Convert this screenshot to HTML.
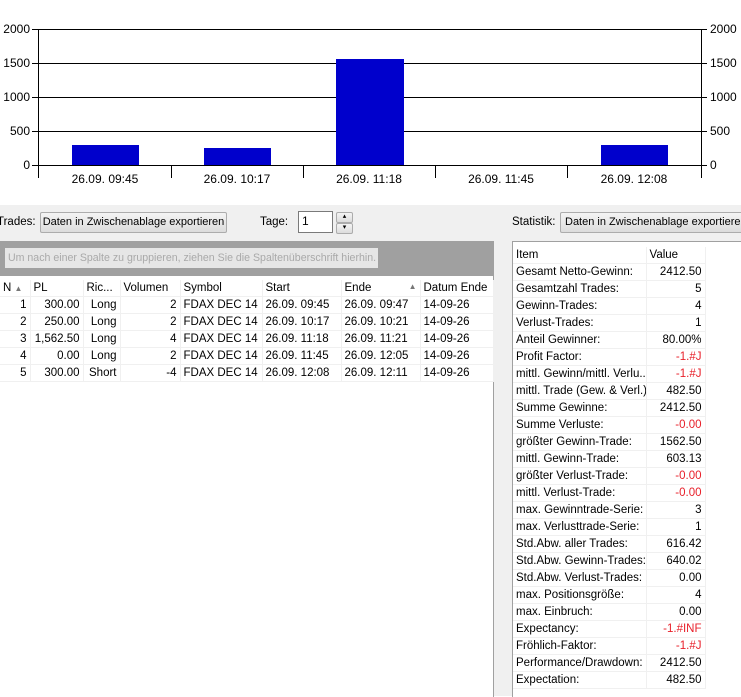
<!DOCTYPE html>
<html><head><meta charset="utf-8"><style>
body{margin:0;width:741px;height:696px;overflow:hidden;background:#fff;font-family:"Liberation Sans",Arial,sans-serif;font-size:12px;color:#000;position:relative}
.a{position:absolute;white-space:nowrap}
.btn{position:absolute;background:linear-gradient(#f4f4f4,#dcdcdc);border:1px solid #acacac;border-radius:2px;height:19px;line-height:19px;text-align:center;font-size:11px;white-space:nowrap;overflow:hidden}
table{border-collapse:collapse;font-size:11.5px;table-layout:fixed}
td{height:16px;padding:0 3px;white-space:nowrap;overflow:hidden;border-bottom:1px solid #f0f0f0;border-right:1px solid #f0f0f0}
.r{text-align:right}
.red{color:#e8202a}
</style></head><body>
<svg class="a" style="left:0;top:0" width="741" height="205" font-family="Liberation Sans,Arial,sans-serif" font-size="12">
<g stroke="#000" stroke-width="1" shape-rendering="crispEdges">
<line x1="32" y1="29.5" x2="707" y2="29.5"/><line x1="32" y1="63.5" x2="707" y2="63.5"/><line x1="32" y1="97.5" x2="707" y2="97.5"/><line x1="32" y1="131.5" x2="707" y2="131.5"/>
<line x1="38.5" y1="29" x2="38.5" y2="178"/><line x1="701.5" y1="29" x2="701.5" y2="178"/>
<line x1="171.5" y1="165" x2="171.5" y2="178"/><line x1="303.5" y1="165" x2="303.5" y2="178"/><line x1="435.5" y1="165" x2="435.5" y2="178"/><line x1="567.5" y1="165" x2="567.5" y2="178"/>
</g>
<g fill="#0000cc"><rect x="72" y="145" width="67" height="20"/><rect x="204" y="148" width="67" height="17"/><rect x="336" y="59" width="68" height="106"/><rect x="601" y="145" width="67" height="20"/></g>
<line x1="32" y1="165.5" x2="707" y2="165.5" stroke="#000" shape-rendering="crispEdges"/>
<g text-anchor="end"><text x="30" y="33">2000</text><text x="30" y="67">1500</text><text x="30" y="101">1000</text><text x="30" y="135">500</text><text x="30" y="169">0</text></g>
<g><text x="710" y="33">2000</text><text x="710" y="67">1500</text><text x="710" y="101">1000</text><text x="710" y="135">500</text><text x="710" y="169">0</text></g>
<g text-anchor="middle"><text x="105" y="183">26.09. 09:45</text><text x="237" y="183">26.09. 10:17</text><text x="369" y="183">26.09. 11:18</text><text x="501" y="183">26.09. 11:45</text><text x="634" y="183">26.09. 12:08</text></g>
</svg>
<div class="a" style="left:0;top:205px;width:741px;height:491px;background:#f0f0f0"></div>
<div class="a" style="left:-3px;top:216px;font-size:11.5px">Trades:</div>
<div class="btn" style="left:40px;top:212px;width:185px">Daten in Zwischenablage exportieren</div>
<div class="a" style="left:260px;top:216px;font-size:11.5px">Tage:</div>
<div class="a" style="left:298px;top:211px;background:#fff;border:1px solid #7a7a7a;line-height:19px;padding-left:3px;box-sizing:border-box;width:35px;height:22px">1</div>
<div class="btn" style="left:336px;top:212px;width:15px;height:9px;line-height:8px;font-size:7px">▴</div>
<div class="btn" style="left:336px;top:223px;width:15px;height:9px;line-height:8px;font-size:7px">▾</div>
<div class="a" style="left:0;top:241px;width:493px;height:455px;background:#fff;border-top:1px solid #a0a0a0;border-right:1px solid #a0a0a0"></div>
<div class="a" style="left:0;top:242px;width:493px;height:34px;background:#a0a0a0"></div>
<div class="a" style="left:5px;top:248px;width:373px;height:20px;background:#e6e6e6;color:#a9a9a9;line-height:20px;padding-left:3px;box-sizing:border-box;font-size:10.6px;overflow:hidden">Um nach einer Spalte zu gruppieren, ziehen Sie die Spaltenüberschrift hierhin.</div>
<table class="a" style="left:0;top:280px;width:493px">
<col style="width:30px"><col style="width:53px"><col style="width:37px"><col style="width:60px"><col style="width:82px"><col style="width:79px"><col style="width:79px"><col style="width:73px">
<tr><td>N <span style="font-size:8px;color:#777">▲</span></td><td>PL</td><td>Ric...</td><td>Volumen</td><td>Symbol</td><td>Start</td><td>Ende<span style="float:right;font-size:8px;color:#777">▲</span></td><td>Datum Ende</td></tr>
<tr><td class="r">1</td><td class="r">300.00</td><td class="r">Long</td><td class="r">2</td><td>FDAX DEC 14</td><td>26.09. 09:45</td><td>26.09. 09:47</td><td>14-09-26</td></tr>
<tr><td class="r">2</td><td class="r">250.00</td><td class="r">Long</td><td class="r">2</td><td>FDAX DEC 14</td><td>26.09. 10:17</td><td>26.09. 10:21</td><td>14-09-26</td></tr>
<tr><td class="r">3</td><td class="r">1,562.50</td><td class="r">Long</td><td class="r">4</td><td>FDAX DEC 14</td><td>26.09. 11:18</td><td>26.09. 11:21</td><td>14-09-26</td></tr>
<tr><td class="r">4</td><td class="r">0.00</td><td class="r">Long</td><td class="r">2</td><td>FDAX DEC 14</td><td>26.09. 11:45</td><td>26.09. 12:05</td><td>14-09-26</td></tr>
<tr><td class="r">5</td><td class="r">300.00</td><td class="r">Short</td><td class="r">-4</td><td>FDAX DEC 14</td><td>26.09. 12:08</td><td>26.09. 12:11</td><td>14-09-26</td></tr>
</table>
<div class="a" style="left:512px;top:216px;font-size:11.5px">Statistik:</div>
<div class="btn" style="left:560px;top:212px;width:190px;text-align:left;padding-left:4px">Daten in Zwischenablage exportieren</div>
<div class="a" style="left:512px;top:241px;width:229px;height:455px;background:#fff;border-top:1px solid #a0a0a0;border-left:1px solid #a0a0a0"></div>
<table class="a" style="left:513px;top:247px;width:192px">
<col style="width:133px"><col style="width:59px">
<tr><td>Item</td><td>Value</td></tr>
<tr><td>Gesamt Netto-Gewinn:</td><td class="r">2412.50</td></tr>
<tr><td>Gesamtzahl Trades:</td><td class="r">5</td></tr>
<tr><td>Gewinn-Trades:</td><td class="r">4</td></tr>
<tr><td>Verlust-Trades:</td><td class="r">1</td></tr>
<tr><td>Anteil Gewinner:</td><td class="r">80.00%</td></tr>
<tr><td>Profit Factor:</td><td class="r red">-1.#J</td></tr>
<tr><td>mittl. Gewinn/mittl. Verlu...</td><td class="r red">-1.#J</td></tr>
<tr><td>mittl. Trade (Gew. &amp; Verl.):</td><td class="r">482.50</td></tr>
<tr><td>Summe Gewinne:</td><td class="r">2412.50</td></tr>
<tr><td>Summe Verluste:</td><td class="r red">-0.00</td></tr>
<tr><td>größter Gewinn-Trade:</td><td class="r">1562.50</td></tr>
<tr><td>mittl. Gewinn-Trade:</td><td class="r">603.13</td></tr>
<tr><td>größter Verlust-Trade:</td><td class="r red">-0.00</td></tr>
<tr><td>mittl. Verlust-Trade:</td><td class="r red">-0.00</td></tr>
<tr><td>max. Gewinntrade-Serie:</td><td class="r">3</td></tr>
<tr><td>max. Verlusttrade-Serie:</td><td class="r">1</td></tr>
<tr><td>Std.Abw. aller Trades:</td><td class="r">616.42</td></tr>
<tr><td>Std.Abw. Gewinn-Trades:</td><td class="r">640.02</td></tr>
<tr><td>Std.Abw. Verlust-Trades:</td><td class="r">0.00</td></tr>
<tr><td>max. Positionsgröße:</td><td class="r">4</td></tr>
<tr><td>max. Einbruch:</td><td class="r">0.00</td></tr>
<tr><td>Expectancy:</td><td class="r red">-1.#INF</td></tr>
<tr><td>Fröhlich-Faktor:</td><td class="r red">-1.#J</td></tr>
<tr><td>Performance/Drawdown:</td><td class="r">2412.50</td></tr>
<tr><td>Expectation:</td><td class="r">482.50</td></tr>
</table>
</body></html>
